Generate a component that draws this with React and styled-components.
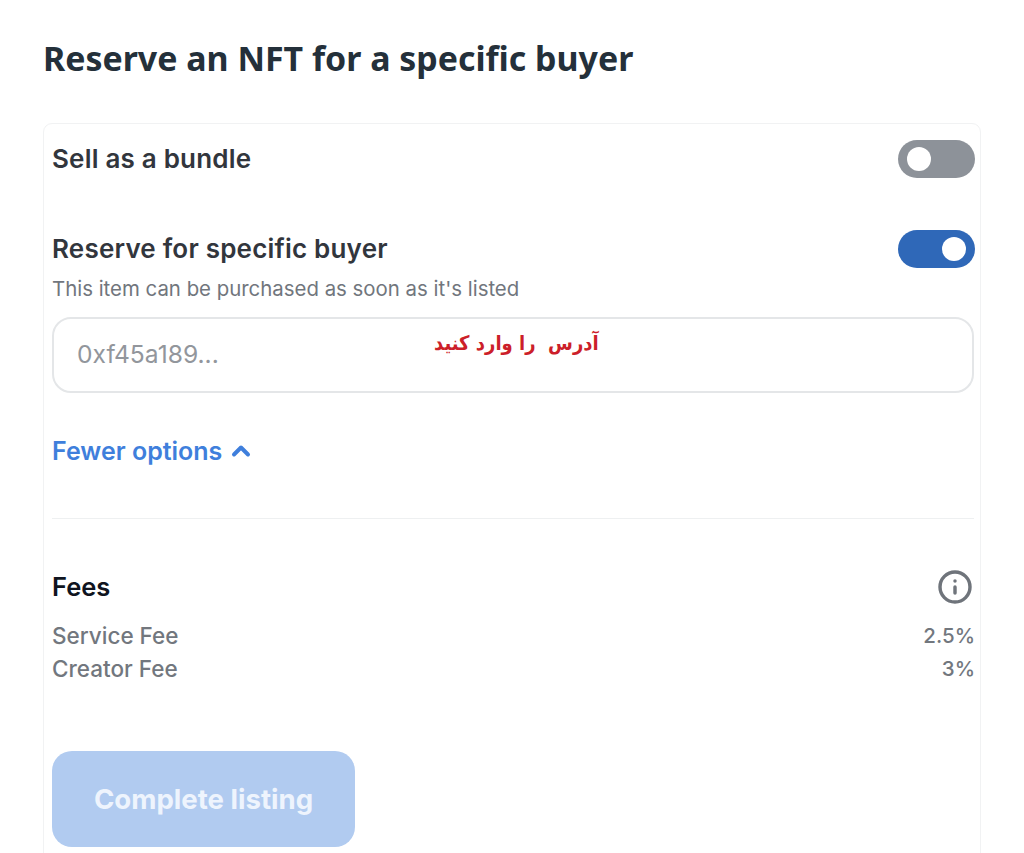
import styled, { createGlobalStyle } from 'styled-components'
import { ChevronUp, Info } from 'lucide-react'

const fees = [
  { label: 'Service Fee', value: '2.5%' },
  { label: 'Creator Fee', value: '3%' },
]

/*---> Component <---*/
export default function App() {
  return (
    <Page>
      <GlobalStyle />
      <Title>Reserve an NFT for a specific buyer</Title>
      <Card>
        <ToggleRow>
          <OptionTitle>Sell as a bundle</OptionTitle>
          <Toggle />
        </ToggleRow>
        <BuyerRow>
          <OptionTitle>Reserve for specific buyer</OptionTitle>
          <Toggle $on />
        </BuyerRow>
        <Hint>This item can be purchased as soon as it's listed</Hint>
        <AddressField>
          <AddressInput placeholder="0xf45a189..." readOnly />
          <Note dir="rtl">آدرس  را وارد کنید</Note>
        </AddressField>
        <OptionsLink>
          Fewer options
          <ChevronUp size={28} strokeWidth={3.4} />
        </OptionsLink>
        <Divider />
        <FeesHeader>
          <FeesTitle>Fees</FeesTitle>
          <Info size={36} strokeWidth={2.3} color="#6f747b" />
        </FeesHeader>
        <FeeList>
          {fees.map((fee) => (
            <FeeRow key={fee.label}>
              <span>{fee.label}</span>
              <FeeValue>{fee.value}</FeeValue>
            </FeeRow>
          ))}
        </FeeList>
        <CompleteButton disabled>Complete listing</CompleteButton>
      </Card>
    </Page>
  )
}

/*---> Styles <---*/
const GlobalStyle = createGlobalStyle`
  html, body {
    margin: 0;
    height: 100%;
    overflow: hidden;
    background: #ffffff;
  }
  * {
    box-sizing: border-box;
  }
`

const Page = styled.div`
  height: 853px;
  overflow: hidden;
  padding: 36px 43px 0;
  font-family: 'Inter', 'Liberation Sans', sans-serif;
`

const Title = styled.h1`
  margin: 0 0 43px;
  font-family: 'Noto Sans', sans-serif;
  font-size: 33.9px;
  line-height: 44px;
  font-weight: 700;
  color: #24303a;
`

const Card = styled.div`
  width: 938px;
  height: 800px;
  padding: 16px 5px 0 8px;
  border: 1px solid #f1f2f3;
  border-radius: 9px;
`

const ToggleRow = styled.div`
  display: flex;
  justify-content: space-between;
  align-items: center;
  height: 38px;
`

const BuyerRow = styled(ToggleRow)`
  margin-top: 52px;
`

const OptionTitle = styled.div`
  padding-bottom: 2px;
  font-size: 26px;
  font-weight: 600;
  letter-spacing: 0.2px;
  color: #32363d;
`

const Toggle = styled.div`
  display: flex;
  align-items: center;
  justify-content: ${(p) => (p.$on ? 'flex-end' : 'flex-start')};
  width: 77px;
  height: 38px;
  padding: 0 9px;
  border-radius: 19px;
  background: ${(p) => (p.$on ? '#2f68b8' : '#8d9299')};

  &::after {
    content: '';
    width: 24px;
    height: 24px;
    border-radius: 50%;
    background: #ffffff;
  }
`

const Hint = styled.div`
  margin-top: 7px;
  font-size: 20.4px;
  line-height: 28px;
  color: #71767d;
`

const AddressField = styled.div`
  position: relative;
  margin-top: 14px;
  margin-right: 1px;
`

const AddressInput = styled.input`
  display: block;
  width: 100%;
  height: 76px;
  padding: 0 23px 3px;
  border: 2px solid #e4e6e8;
  border-radius: 19px;
  outline: none;
  font-family: inherit;
  font-size: 24.6px;
  color: #32363d;

  &::placeholder {
    color: #92969c;
    opacity: 1;
  }
`

const Note = styled.div`
  position: absolute;
  top: 14px;
  left: 382px;
  font-family: 'DejaVu Sans', sans-serif;
  font-size: 20px;
  font-weight: 700;
  white-space: pre;
  color: #cc1f2a;
  transform: scaleX(0.9);
  transform-origin: left center;
`

const OptionsLink = styled.div`
  display: flex;
  align-items: center;
  gap: 5px;
  margin-top: 41px;
  font-size: 25px;
  font-weight: 600;
  line-height: 34px;
  color: #3f7fdc;
`

const Divider = styled.div`
  height: 1px;
  margin-top: 50px;
  margin-right: 1px;
  background: #eef0f1;
`

const FeesHeader = styled.div`
  display: flex;
  justify-content: space-between;
  align-items: center;
  height: 38px;
  margin-top: 49px;
  padding-right: 2px;
`

const FeesTitle = styled.div`
  padding-bottom: 1px;
  font-size: 25.5px;
  font-weight: 600;
  color: #0f1420;
`

const FeeList = styled.div`
  display: flex;
  flex-direction: column;
  gap: 1px;
  margin-top: 14px;
`

const FeeRow = styled.div`
  display: flex;
  justify-content: space-between;
  font-size: 22.5px;
  font-weight: 500;
  line-height: 32px;
  color: #72777e;
`

const FeeValue = styled.span`
  font-size: 20.5px;
`

const CompleteButton = styled.button`
  display: block;
  width: 303px;
  height: 96px;
  margin-top: 66px;
  border: 0;
  border-radius: 20px;
  background: #b1cbf0;
  font-family: inherit;
  font-size: 27.6px;
  font-weight: 700;
  color: #eef4fd;
`
